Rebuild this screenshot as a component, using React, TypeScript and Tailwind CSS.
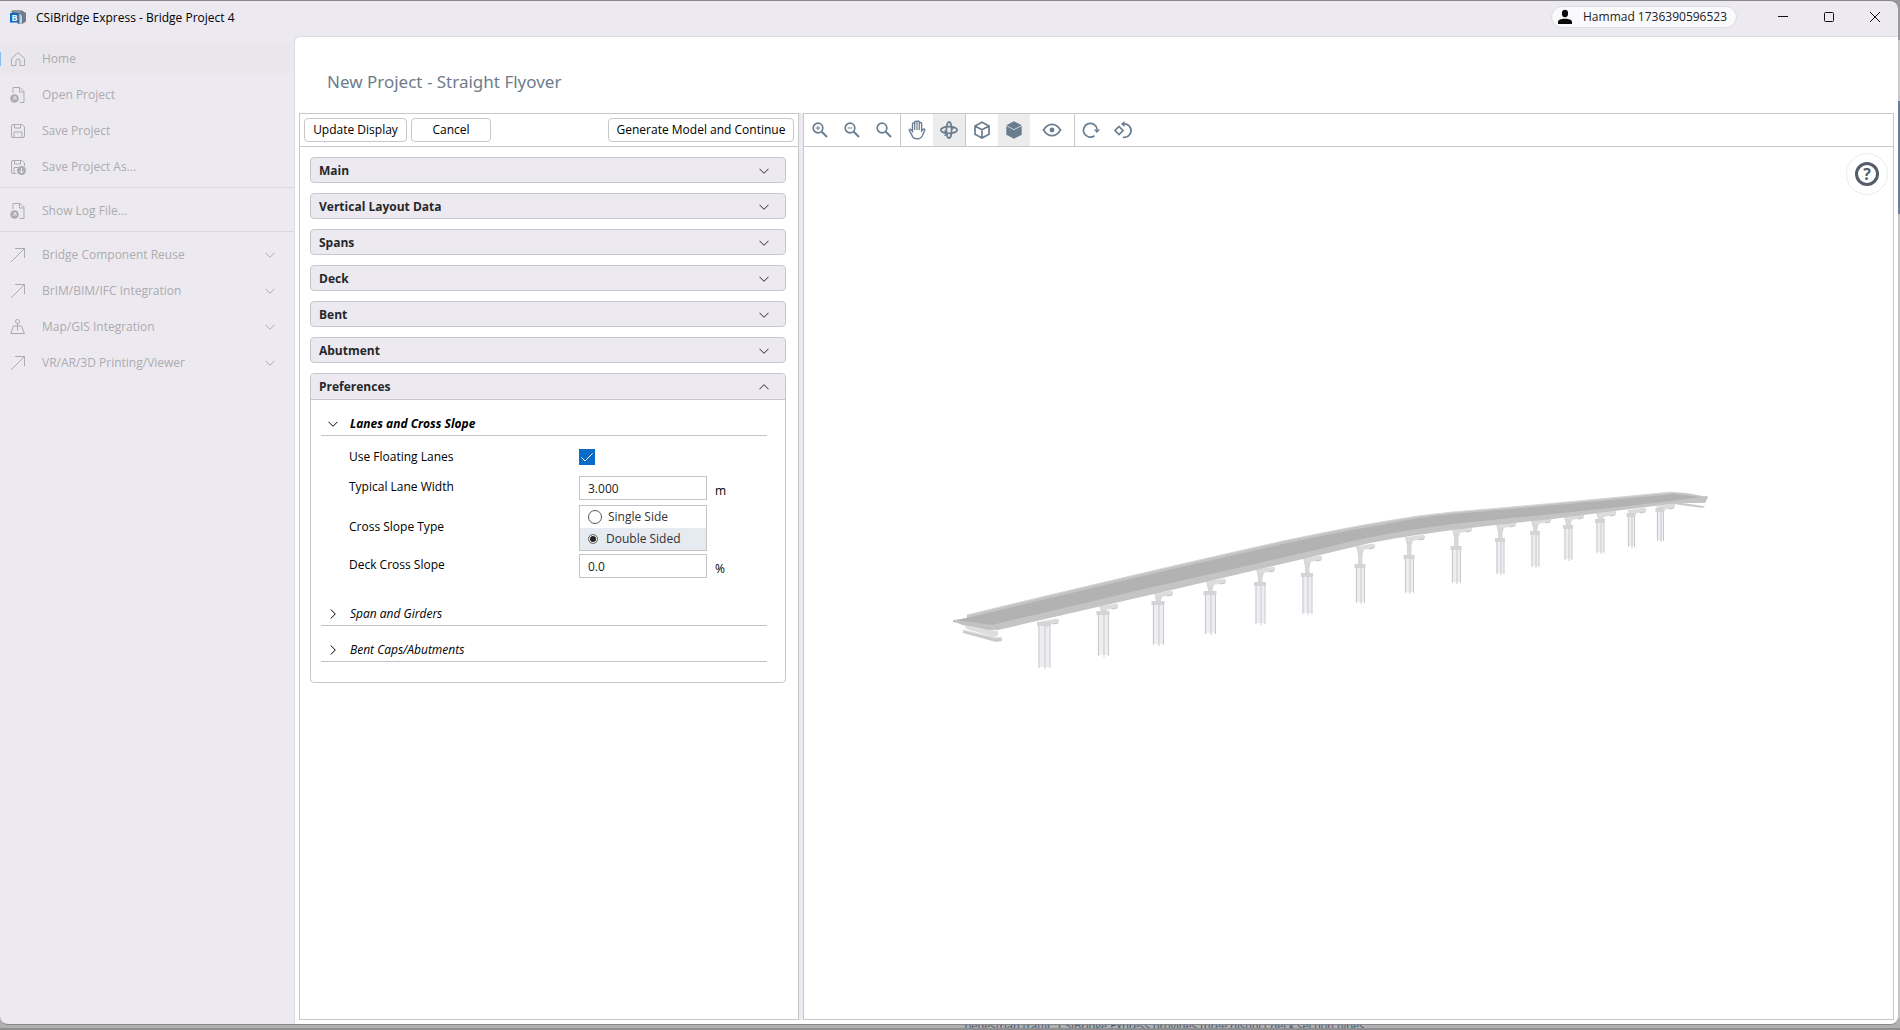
import { useState, type ReactNode } from "react"
import clsx from "clsx"

type IconProps = { className?: string }

const sidebarIcons = {
  home: (
    <path d="M1.500 7.500 8 1.500l6.500 6v7h-4.500V10a2 2 0 0 0-4 0v4.500H1.500z" />
  ),
  open: (
    <>
      <path d="M3 6V.5h7l4 4v11H9.500M9.500.5v4.500h4.500" />
      <circle cx="4.500" cy="11.500" r="4.300" fill="currentColor" stroke="none" />
      <path d="M2.800 13.200 6 10M3.300 10H6v2.700" stroke="#eceaf0" />
    </>
  ),
  save: (
    <path d="M1.500 3A1.500 1.500 0 0 1 3 1.500h9L14.500 4v9a1.500 1.500 0 0 1-1.500 1.500H3A1.500 1.500 0 0 1 1.500 13zM4.500 1.500v3.500h6V1.500M4 14.500V9h8v5.500" />
  ),
  saveAs: (
    <>
      <path d="M6.500 14.500H3A1.500 1.500 0 0 1 1.500 13V3A1.500 1.500 0 0 1 3 1.500h9L14.500 4v3M4.500 1.500v3.500h6V1.500M4 14.500V8.500h4.500" />
      <circle cx="11.500" cy="11.500" r="4.500" fill="currentColor" stroke="none" />
      <path d="M11.500 9v5M9.500 12l2 2 2-2" stroke="#eceaf0" />
    </>
  ),
  arrow: <path d="M1 15 14.500 1.500M5 1.500h9.500V11" />,
  map: (
    <>
      <circle cx="7.500" cy="2.500" r="2" />
      <path d="M7.500 4.500v7M5 7H3.500L.8 14.500h13.600L11.500 7H10M5 7h5" />
    </>
  ),
}

type SidebarIcon = keyof typeof sidebarIcons

type MenuEntry = {
  label: string
  icon: SidebarIcon
  expandable?: boolean
  active?: boolean
}

const menuGroups: MenuEntry[][] = [
  [
    { label: "Home", icon: "home", active: true },
    { label: "Open Project", icon: "open" },
    { label: "Save Project", icon: "save" },
    { label: "Save Project As...", icon: "saveAs" },
  ],
  [{ label: "Show Log File...", icon: "open" }],
  [
    { label: "Bridge Component Reuse", icon: "arrow", expandable: true },
    { label: "BrIM/BIM/IFC Integration", icon: "arrow", expandable: true },
    { label: "Map/GIS Integration", icon: "map", expandable: true },
    { label: "VR/AR/3D Printing/Viewer", icon: "arrow", expandable: true },
  ],
]

const closedSections = ["Main", "Vertical Layout Data", "Spans", "Deck", "Bent", "Abutment"]

function Chevron({ className }: IconProps) {
  return (
    <svg viewBox="0 0 10 10" fill="none" stroke="currentColor" className={clsx("size-2.5 shrink-0", className)}>
      <path d="M.5 2.800 5 7.300l4.500-4.500" />
    </svg>
  )
}

function AppLogo() {
  return (
    <svg viewBox="0 0 16 14" className="h-3.5 w-4">
      <path d="M1 1 5 0l7 .5L16 3v8.500L12 14H8z" fill="#6f7b87" />
      <path d="M9.500 4c1.500 0 2.500 1.500 2.500 4v5.500l-2.500.5z" fill="#b9d3ec" />
      <path d="M1 1 5 0l7 .5L9 3z" fill="#8d99a5" />
      <rect x="0" y="3" width="8.500" height="9.500" fill="#0f6ac4" />
      <text x="1.500" y="11" fill="#fff" fontSize="9" fontWeight="700">
        B
      </text>
    </svg>
  )
}

function TitleBar() {
  return (
    <header className="flex h-[35px] shrink-0 items-center pb-[3px]">
      <div className="flex items-center gap-2.5 pl-2.5">
        <AppLogo />
        <h1 className="pt-0.5 text-xs text-black">CSiBridge Express - Bridge Project 4</h1>
      </div>
      <div className="ml-auto flex items-center">
        <button className="mr-[23px] flex h-[22px] w-[186px] items-center gap-2.5 rounded-full border border-[#dddbe3] bg-[#fafafc] pl-[5px] text-xs text-[#222]">
          <svg viewBox="0 0 16 16" className="size-4" fill="#0a0a0a">
            <path d="M5 3.500C5 1.800 6.300.8 8 .8s3 1 3 2.700v1.700c0 1.700-1.300 3-3 3s-3-1.300-3-3zM1 15v-2c0-2 3-3.200 7-3.200s7 1.200 7 3.200v2z" />
          </svg>
          Hammad 1736390596523
        </button>
        <button aria-label="Minimize" className="grid h-[30px] w-[46px] place-items-center">
          <svg viewBox="0 0 12 12" className="size-3" fill="none" stroke="#111">
            <path d="M1 5.500h10" />
          </svg>
        </button>
        <button aria-label="Maximize" className="grid h-[30px] w-[46px] place-items-center">
          <svg viewBox="0 0 12 12" className="size-3" fill="none" stroke="#111">
            <rect x="1.500" y="1.500" width="9" height="9" rx="1" />
          </svg>
        </button>
        <button aria-label="Close" className="grid h-[30px] w-[46px] place-items-center">
          <svg viewBox="0 0 12 12" className="size-3" fill="none" stroke="#111">
            <path d="m1 1 10 10M11 1 1 11" />
          </svg>
        </button>
      </div>
    </header>
  )
}

function Sidebar() {
  return (
    <nav className="w-[294px] shrink-0 pt-[7px] text-xs text-[#acabaf]">
      {menuGroups.map((group, i) => (
        <ul
          key={i}
          className={clsx("flex flex-col gap-1", i > 0 && "mt-1 border-t border-[#d9d7df] pt-[7px]")}
        >
          {group.map((entry) => (
            <li key={entry.label} className="flex items-center">
              <span className={clsx("h-3.5 w-px", entry.active && "bg-[#86bdf0]")} />
              <button
                className={clsx(
                  "mr-1 flex h-8 flex-1 items-center rounded-sm pl-[9px] pr-[15px] text-left",
                  entry.active && "bg-[#e9e7ec]"
                )}
              >
                <svg viewBox="0 0 16 16" className="mr-4 size-4 shrink-0" fill="none" stroke="currentColor">
                  {sidebarIcons[entry.icon]}
                </svg>
                {entry.label}
                {entry.expandable && <Chevron className="ml-auto" />}
              </button>
            </li>
          ))}
        </ul>
      ))}
    </nav>
  )
}

function AccordionHeader({ title, open, onToggle }: { title: string; open?: boolean; onToggle?: () => void }) {
  return (
    <button
      onClick={onToggle}
      aria-expanded={!!open}
      className={clsx(
        "flex h-[26px] w-full items-center justify-between border-[#c8c8cb] bg-[#eceaf0] pl-2 pr-4 text-xs font-bold text-[#26272b]",
        open ? "rounded-t border-b" : "rounded border pt-0.5"
      )}
    >
      {title}
      <Chevron className={open ? "rotate-180" : ""} />
    </button>
  )
}

function SubSection({ title, open, children }: { title: string; open?: boolean; children?: ReactNode }) {
  return (
    <section>
      <button
        aria-expanded={!!open}
        className={clsx(
          "flex h-6 w-full items-center gap-3 border-b border-[#c4c4c7] pl-[7px] text-xs italic text-black",
          open && "font-bold"
        )}
      >
        <Chevron className={open ? "" : "-rotate-90"} />
        {title}
      </button>
      {children}
    </section>
  )
}

function NumberField({ id, label, value, unit }: { id: string; label: string; value: string; unit: string }) {
  return (
    <div className="flex h-6 items-center">
      <label htmlFor={id} className="w-[230px] pb-0.5">
        {label}
      </label>
      <input
        id={id}
        defaultValue={value}
        className="h-6 w-32 border border-[#c4c4c7] bg-white px-2 text-xs text-[#222] outline-none"
      />
      <span className="pl-2 pt-1.5">{unit}</span>
    </div>
  )
}

function SlopeTypeField() {
  const [value, setValue] = useState("Double Sided")

  return (
    <div role="radiogroup" aria-labelledby="slope-type" className="flex items-center pb-[3px] pt-[5px]">
      <span id="slope-type" className="w-[230px] pb-0.5">
        Cross Slope Type
      </span>
      <div className="flex h-[46px] w-32 flex-col border border-[#c4c4c7]">
        {["Single Side", "Double Sided"].map((option) => {
          const checked = option === value
          return (
            <label
              key={option}
              className={clsx(
                "flex flex-1 items-center pl-2 text-[#333]",
                checked ? "gap-2 bg-[#e6eaf1]" : "gap-1.5"
              )}
            >
              <input
                type="radio"
                name="slope-type"
                checked={checked}
                onChange={() => setValue(option)}
                className={clsx(
                  "appearance-none rounded-full border",
                  checked
                    ? "size-2.5 border-[#777] bg-[#222] inset-ring inset-ring-white"
                    : "size-3.5 border-[#555] bg-white"
                )}
              />
              {option}
            </label>
          )
        })}
      </div>
    </div>
  )
}

function PreferencesBody() {
  return (
    <div className="flex flex-col pb-5 pl-2.5 pr-[18px] pt-3">
      <SubSection title="Lanes and Cross Slope" open>
        <div className="flex flex-col pb-6 pl-7 pt-[9px] text-xs text-black">
          <div className="mb-[7px] flex h-6 items-center">
            <label htmlFor="floating" className="w-[230px]">
              Use Floating Lanes
            </label>
            <span className="relative grid size-4">
              <input id="floating" type="checkbox" defaultChecked className="size-4 appearance-none bg-[#0a6cc9]" />
              <svg viewBox="0 0 16 16" className="pointer-events-none absolute inset-0" fill="none" stroke="#fff">
                <path d="m2.500 8.500 3.500 3.500 7.500-7.500" />
              </svg>
            </span>
          </div>
          <NumberField id="lane-width" label="Typical Lane Width" value="3.000" unit="m" />
          <SlopeTypeField />
          <NumberField id="deck-slope" label="Deck Cross Slope" value="0.0" unit="%" />
        </div>
      </SubSection>
      <div className="flex flex-col gap-3">
        <SubSection title="Span and Girders" />
        <SubSection title="Bent Caps/Abutments" />
      </div>
    </div>
  )
}

const actionButton = "h-6 rounded border border-[#c8c8cb] bg-white text-xs text-black"

function SettingsPanel() {
  const [open, setOpen] = useState(true)

  return (
    <section className="flex w-[500px] shrink-0 flex-col border border-[#c8c8cb] bg-white">
      <div className="flex h-[33px] shrink-0 items-center gap-1 border-b border-[#c8c8cb] px-1">
        <button className={clsx(actionButton, "w-[103px]")}>Update Display</button>
        <button className={clsx(actionButton, "w-20")}>Cancel</button>
        <button className={clsx(actionButton, "ml-auto w-[186px]")}>Generate Model and Continue</button>
      </div>
      <div className="flex flex-col gap-2.5 pl-2.5 pr-3 pt-2.5">
        {closedSections.map((title) => (
          <AccordionHeader key={title} title={title} />
        ))}
        <div className="rounded border border-[#c8c8cb]">
          <AccordionHeader title="Preferences" open={open} onToggle={() => setOpen(!open)} />
          {open && <PreferencesBody />}
        </div>
      </div>
    </section>
  )
}

const toolIcons = {
  zoomIn: (
    <>
      <circle cx="7" cy="7" r="4.800" />
      <path d="m10.500 10.500 5.500 5.500" strokeWidth="2" />
      <path d="M4.800 7h4.400M7 4.800v4.400" strokeWidth="1" />
    </>
  ),
  zoomOut: (
    <>
      <circle cx="7" cy="7" r="4.800" />
      <path d="m10.500 10.500 5.500 5.500" strokeWidth="2" />
      <path d="M4.800 7h4.400" strokeWidth="1" />
    </>
  ),
  zoom: (
    <>
      <circle cx="7" cy="7" r="4.800" />
      <path d="m10.500 10.500 5.500 5.500" strokeWidth="2" />
    </>
  ),
  hand: (
    <>
      <path
        d="M4.500 10.500V3c0-1.500 2.200-1.500 2.200 0V1.500c0-1.600 2.300-1.600 2.300 0V1c0-1.400 2.300-1.400 2.300 0v1.500c0-1.400 2.300-1.400 2.300 0v7.500l1.500-1.700c1-.8 2.100 0 1.600 1L14.500 14.500c-1 2.200-2.700 3.300-5 3.300-3 0-5.200-1.800-5.700-4L1.300 9.500c-.3-1.200 1-1.600 1.700-.7z"
        strokeWidth="1.400"
      />
      <path d="M6.700 2.500V9M9 1.500V9M11.300 2V9" strokeWidth="1.200" />
    </>
  ),
  orbit: (
    <>
      <ellipse cx="9" cy="9" rx="8.200" ry="3.400" />
      <ellipse cx="9" cy="9" rx="2.600" ry="8.200" />
      <path d="m4.500 9.500 2.500 2.700-2.500 2.600M11.500 8.500 14 6" strokeWidth="1.400" />
    </>
  ),
  cube: <path d="M9 1.200 16 5v8.200L9 17l-7-3.800V5zM2 5l7 3.800L16 5M9 8.800V17" />,
  solid: (
    <>
      <path d="M9 .3 16.700 4.300 9 8.300 1.300 4.300z" fill="currentColor" stroke="none" />
      <path d="M1.300 5 9 9l7.700-4v8.700L9 17.700l-7.700-4z" fill="currentColor" stroke="none" />
    </>
  ),
  eye: (
    <>
      <path d="M.5 9C3 5 6 3.300 9 3.300S15 5 17.500 9C15 13 12 14.700 9 14.700S3 13 .5 9z" />
      <circle cx="9" cy="9" r="2.400" fill="currentColor" stroke="none" />
    </>
  ),
  rotate: (
    <>
      <path d="M12.500 14.800A6.900 6.900 0 1 1 15.200 8.500" />
      <path d="M11.800 8.500h6.200l-3.100 3.500z" fill="currentColor" stroke="none" />
    </>
  ),
  rotateObject: (
    <>
      <path d="M9.500 3A6.700 6.700 0 1 1 9 16.200" />
      <path d="M10.500 0v6L7 3z" fill="currentColor" stroke="none" />
      <path d="m5 5.500 4 4-4 4-4-4z" />
    </>
  ),
}

type Tool = { name: string; icon: keyof typeof toolIcons; active?: boolean; wide?: boolean }

const toolGroups: Tool[][] = [
  [
    { name: "Zoom in", icon: "zoomIn" },
    { name: "Zoom out", icon: "zoomOut" },
    { name: "Zoom extents", icon: "zoom" },
  ],
  [
    { name: "Pan", icon: "hand" },
    { name: "Orbit", icon: "orbit", active: true },
  ],
  [
    { name: "Wireframe", icon: "cube" },
    { name: "Shaded", icon: "solid", active: true },
    { name: "Visibility", icon: "eye", wide: true },
  ],
  [
    { name: "Rotate view", icon: "rotate" },
    { name: "Rotate model", icon: "rotateObject" },
  ],
]

function ViewerToolbar() {
  return (
    <div className="flex h-[33px] shrink-0 border-b border-[#c8c8cb]">
      {toolGroups.map((group, i) => (
        <div key={i} className={clsx("flex", i > 0 && "border-l border-[#c8c8cb]")}>
          {group.map((tool) => (
            <button
              key={tool.name}
              aria-label={tool.name}
              className={clsx(
                "grid place-items-center text-[#6a7d8f]",
                tool.wide ? "w-11" : "w-8",
                tool.active && "bg-[#ececed]"
              )}
            >
              <svg
                viewBox="0 0 18 18"
                className="size-[18px] overflow-visible"
                fill="none"
                stroke="currentColor"
                strokeWidth="1.700"
              >
                {toolIcons[tool.icon]}
              </svg>
            </button>
          ))}
        </div>
      ))}
    </div>
  )
}

// x: pier centre, y: pile cap top, bottom: pile tip, w: cap width, armX/armY: cap beam end
const piers = [
  { x: 1044, y: 622, bottom: 668, w: 14, armX: 1059, armY: 621 },
  { x: 1103, y: 611, bottom: 656, w: 13, armX: 1118, armY: 606 },
  { x: 1158, y: 601, bottom: 645, w: 13, armX: 1173, armY: 593 },
  { x: 1210, y: 591, bottom: 634, w: 13, armX: 1226, armY: 581 },
  { x: 1260, y: 582, bottom: 624, w: 12, armX: 1275, armY: 569 },
  { x: 1307, y: 573, bottom: 614, w: 12, armX: 1322, armY: 558 },
  { x: 1360, y: 564, bottom: 603, w: 11, armX: 1375, armY: 546 },
  { x: 1409, y: 555, bottom: 593, w: 11, armX: 1425, armY: 537 },
  { x: 1456, y: 546, bottom: 583, w: 11, armX: 1472, armY: 529 },
  { x: 1500, y: 538, bottom: 574, w: 10, armX: 1516, armY: 524 },
  { x: 1535, y: 531, bottom: 567, w: 10, armX: 1551, armY: 520 },
  { x: 1568, y: 525, bottom: 560, w: 10, armX: 1584, armY: 516 },
  { x: 1600, y: 519, bottom: 553, w: 10, armX: 1616, armY: 513 },
  { x: 1631, y: 513, bottom: 547, w: 9, armX: 1646, armY: 510 },
  { x: 1660, y: 508, bottom: 541, w: 9, armX: 1675, armY: 506 },
]

function BridgeModel() {
  return (
    <svg viewBox="804 147 1089 872" className="size-full" role="img" aria-label="Bridge model">
      {piers.map((p) => {
        const half = p.w / 2
        return (
          <g key={p.x}>
            <path d={`M${p.x - half + 1} ${p.y + 3}h${p.w - 2}V${p.bottom - 1}h-${p.w - 2}z`} fill="#eeedf1" />
            <path
              d={`M${p.x - half + 2} ${p.y + 3}V${p.bottom}M${p.x + 1} ${p.y + 3}V${p.bottom + 1}M${p.x + half - 1} ${p.y + 3}V${p.bottom}`}
              stroke="#cac9cd"
            />
            <path
              d={`M${p.x - 4} ${p.armY}h9l-2.500 9V${p.y + 1}h-4.500V${Math.min(p.armY + 9, p.y)}z`}
              fill="#d8d8da"
            />
            <path d={`M${p.x} ${p.armY + 2}L${p.armX - 2} ${p.armY}`} stroke="#dcdcde" strokeWidth="4.500" strokeLinecap="round" />
            <path d={`M${p.armX - 6} ${p.armY + 3}l5-1`} stroke="#c2c2c4" />
            <rect x={p.x - half} y={p.y} width={p.w} height="4" fill="#d4d4d6" />
          </g>
        )
      })}
      {/* abutments */}
      <path d="M963 630l33 7 6 1v3l-6 1-33-9z" fill="#cbcbcd" />
      <path d="M963 630l33 8 6-1" fill="none" stroke="#e4e4e6" />
      <path d="M965 625l22 4 11 2v5h-7l-25-7z" fill="#dededf" />
      <path d="M1676 502l27 4 2-1-2 3-30-4z" fill="#c9c9cb" />
      <path d="M1690 497l18-1-3 7-20-1z" fill="#d2d2d4" />
      {/* deck: parapet, girder face, roadway */}
      <path
        d="M953 620l14-1v-4Q1140 573 1283 541Q1350 527 1387 521Q1420 515 1453 512Q1550 504 1672 492l14 1 22 4-3 6-25 0Q1620 510 1553 519Q1500 524 1453 530Q1400 537 1370 543Q1345 549 1320 555L1180 588 998 630l-36-5z"
        fill="#c4c4c5"
      />
      <path
        d="M956 620l20-4Q1140 576 1283 544Q1350 530 1387 524Q1420 517 1453 514Q1550 506 1674 494l26 3-28 4Q1620 507 1553 514Q1500 519 1453 524Q1420 528 1387 534Q1350 541 1320 549L1140 590 992 625z"
        fill="#b2b2b3"
      />
      <path d="M953 620l36 8 9-1v2l-9 1-36-8z" fill="#c0c0c2" />
      <path d="M967 615Q1140 573 1283 541Q1350 527 1387 521Q1420 515 1453 512Q1550 504 1672 492" fill="none" stroke="#d6d6d7" />
    </svg>
  )
}

function Viewer() {
  return (
    <section className="flex min-w-0 flex-1 flex-col border border-[#c8c8cb] bg-white">
      <ViewerToolbar />
      <div className="relative min-h-0 flex-1">
        <BridgeModel />
        <button
          aria-label="Help"
          className="absolute right-[5px] top-1.5 grid size-[42px] place-items-center rounded-full border border-[#ececee] bg-white"
        >
          <span className="grid size-6 place-items-center rounded-full border-3 border-[#555d68] text-base font-bold leading-none text-[#555d68]">
            ?
          </span>
        </button>
      </div>
    </section>
  )
}

function Backdrop() {
  return (
    <>
      <div className="absolute inset-y-0 right-0 flex w-2 flex-col bg-[#c4c4c6]">
        <span className="h-10 bg-[#9a9a9c]" />
        <span className="h-[61px] bg-[#c9c9cb]" />
        <span className="h-[113px] bg-[#6b7f98]" />
      </div>
      <div className="absolute inset-x-0 bottom-0 flex h-3 justify-center overflow-hidden border-b-2 border-[#8f8f91] bg-[#b0b0b0] pl-[432px] text-[11px] text-[#3f566e]">
        <p className="whitespace-nowrap leading-4">
          pedestrian traffic. CSiBridge Express provides three distinct deck section types.
        </p>
      </div>
    </>
  )
}

export default function App() {
  return (
    <div className="relative flex h-screen flex-col overflow-hidden bg-[#b0b0b0] font-['Open_Sans','Noto_Sans',sans-serif]">
      <Backdrop />
      <div className="relative mb-[5px] mr-0.5 flex min-h-0 flex-1 flex-col rounded-b-lg rounded-tr-lg border-b border-t border-[#88888c] bg-[#eceaf0]">
        <TitleBar />
        <div className="flex min-h-0 flex-1">
          <Sidebar />
          <main className="flex min-w-0 flex-1 flex-col rounded-br-lg rounded-tl-md border-l border-t border-[#dcdae2] bg-white px-1 pb-1">
            <h2 className="flex h-[76px] shrink-0 items-center pl-7 pt-3.5 font-['Noto_Sans',sans-serif] text-[17px] text-[#6d7c8b]">
              New Project - Straight Flyover
            </h2>
            <div className="flex min-h-0 flex-1">
              <SettingsPanel />
              <div className="w-1 bg-[#eceaf0]" />
              <Viewer />
            </div>
          </main>
        </div>
      </div>
    </div>
  )
}
